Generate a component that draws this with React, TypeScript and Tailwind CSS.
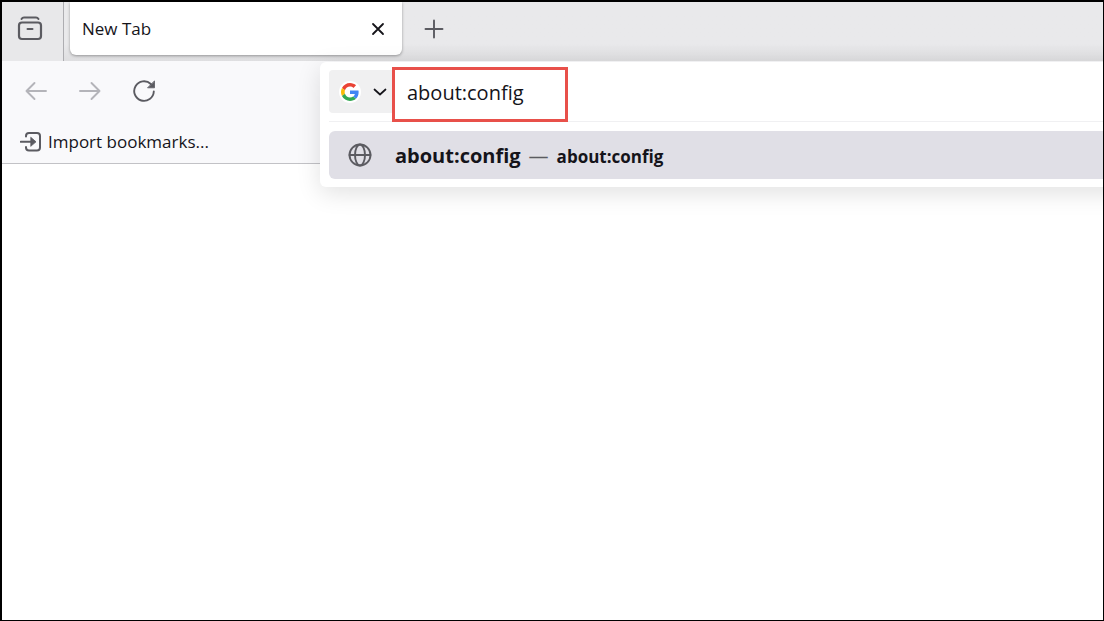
import type { ReactNode } from "react";

const Icon = ({ className, viewBox, children }: { className: string; viewBox: string; children: ReactNode }) => (
  <svg className={className} viewBox={viewBox} fill="none" stroke="currentColor" strokeLinecap="round" strokeLinejoin="round" aria-hidden="true">
    {children}
  </svg>
);

const GoogleLogo = () => (
  <svg className="size-[18px]" viewBox="0 0 48 48" aria-hidden="true">
    <path fill="#ea4335" d="M24 9.5c3.54 0 6.71 1.22 9.21 3.6l6.85-6.85C35.9 2.38 30.47 0 24 0 14.62 0 6.51 5.38 2.56 13.22l7.98 6.19C12.43 13.72 17.74 9.5 24 9.5z" />
    <path fill="#4285f4" d="M46.98 24.55c0-1.57-.15-3.09-.38-4.55H24v9.02h12.94c-.58 2.96-2.26 5.48-4.78 7.18l7.73 6c4.51-4.18 7.09-10.36 7.09-17.65z" />
    <path fill="#fbbc05" d="M10.53 28.59c-.48-1.45-.76-2.99-.76-4.59s.27-3.14.76-4.59l-7.98-6.19C.92 16.46 0 20.12 0 24c0 3.88.92 7.54 2.56 10.78l7.97-6.19z" />
    <path fill="#34a853" d="M24 48c6.48 0 11.93-2.13 15.89-5.81l-7.73-6c-2.15 1.45-4.92 2.3-8.16 2.3-6.26 0-11.57-4.22-13.47-9.91l-7.98 6.19C6.51 42.62 14.62 48 24 48z" />
  </svg>
);

const TabStrip = () => (
  <div className="flex h-[59px] bg-linear-to-b from-[#e9e9eb] from-70% to-[#dedee0]">
    <button type="button" aria-label="Firefox View" className="flex w-[62px] shrink-0 justify-center border-r border-[#adadb1] bg-[#e8e8ea] pt-3.5 pr-1.5 text-[#5b5b61]">
      <Icon className="h-[25px] w-[26px]" viewBox="0 0 26 25">
        <path d="M4.5 3c.6-1 1.500-1.400 2.500-1.400h12c1 0 1.900.4 2.500 1.400" strokeWidth="2" />
        <rect x="2" y="6.500" width="22" height="16.500" rx="3" strokeWidth="2.200" />
        <path d="M10.500 13h5" strokeWidth="2" />
      </Icon>
    </button>
    <div className="ml-1.5 flex h-[53px] w-[332px] shrink-0 items-center justify-between rounded-b-md bg-white pr-4 pl-3 shadow-[0_1px_3px_rgba(0,0,0,0.35)]">
      <span className="text-[17px] text-[#15141a]">New Tab</span>
      <button type="button" aria-label="Close tab" className="text-[#15141a]">
        <Icon className="size-4" viewBox="0 0 16 16">
          <path d="m3 3 10 10M13 3 3 13" strokeWidth="1.800" />
        </Icon>
      </button>
    </div>
    <button type="button" aria-label="New tab" className="ml-[22px] flex w-5 justify-center pt-[17px] text-[#5b5b61]">
      <Icon className="size-5 shrink-0" viewBox="0 0 20 20">
        <path d="M10 1.500v17M1.500 10h17" strokeWidth="1.900" />
      </Icon>
    </button>
  </div>
);

const Toolbar = () => (
  <div className="h-[103px] border-b border-[#c2c2c6] bg-[#f9f9fb]">
    <nav className="flex h-15 items-center gap-8 pl-[23px]">
      <button type="button" aria-label="Back" disabled className="text-[#b4b4b9]">
        <Icon className="size-[22px]" viewBox="0 0 22 22">
          <path d="M21 11H1.500M9.500 3l-8 8 8 8" strokeWidth="1.900" />
        </Icon>
      </button>
      <button type="button" aria-label="Forward" disabled className="text-[#b4b4b9]">
        <Icon className="size-[22px]" viewBox="0 0 22 22">
          <path d="M1 11h19.500M12.500 3l8 8-8 8" strokeWidth="1.900" />
        </Icon>
      </button>
      <button type="button" aria-label="Reload" className="text-[#5b5b61]">
        <Icon className="size-[22px]" viewBox="0 0 22 22">
          <path d="M20.800 11.500A9.800 9.800 0 1 1 17.800 4" strokeWidth="1.900" />
          <path d="M21.500 1.200v6.600h-6.600z" fill="currentColor" strokeWidth=".8" />
        </Icon>
      </button>
    </nav>
    <button type="button" className="flex h-[42px] items-center gap-1.5 pl-[18px] text-[17px] text-[#15141a]">
      <Icon className="size-[22px] text-[#5b5b61]" viewBox="0 0 22 22">
        <path d="M6 5.500V5a3 3 0 0 1 3-3h8a3 3 0 0 1 3 3v11.500a3 3 0 0 1-3 3H9a3 3 0 0 1-3-3V16" strokeWidth="2" />
        <path d="M.8 10.800H12" strokeWidth="2" />
        <path d="m11 6.500 5 4.300-5 4.300z" fill="currentColor" strokeWidth=".8" />
      </Icon>
      Import bookmarks...
    </button>
  </div>
);

const UrlBar = () => (
  <div className="absolute top-[60px] -right-8 left-[318px] rounded-l-md bg-white pb-2 pl-[9px] shadow-[0_6px_24px_rgba(0,0,0,0.12)]">
    <div className="flex h-15 border-b border-[#f0f0f2] pt-2">
      <button type="button" aria-label="Search engine" className="flex h-[43px] w-[63px] shrink-0 items-center rounded-l-sm bg-[#f0f0f1] pl-2.5 text-[#15141a]">
        <span className="flex size-[22px] items-center justify-center rounded-full bg-white">
          <GoogleLogo />
        </span>
        <Icon className="ml-3 h-2 w-3.5" viewBox="0 0 14 8">
          <path d="m1.500 1.500 5.500 5 5.500-5" strokeWidth="1.700" />
        </Icon>
      </button>
      <div className="relative flex-1">
        <input aria-label="Search or enter address" defaultValue="about:config" className="h-[45px] w-full bg-transparent pl-[15px] text-[20px] text-[#15141a] outline-none" />
        <div className="pointer-events-none absolute -top-[3px] left-0 h-[55px] w-[176px] border-3 border-[#e8504a]" />
      </div>
    </div>
    <a href="about:config" className="mt-[9px] flex h-12 items-center rounded-l-md bg-[#e0dfe6] pl-[19px] text-[#15141a]">
      <Icon className="size-6 text-[#5b5b61]" viewBox="0 0 24 24">
        <circle cx="12" cy="12" r="10.500" strokeWidth="1.900" />
        <ellipse cx="12" cy="12" rx="5" ry="10.500" strokeWidth="1.900" />
        <path d="M1.500 12h21" strokeWidth="1.900" />
      </Icon>
      <span className="ml-[23px] flex items-baseline pt-0.5 text-[20px]">
        <span className="font-bold">about:config</span>
        <span className="mx-2 text-[#5b5b61]">—</span>
        <span className="text-[17px] font-bold">about:config</span>
      </span>
    </a>
  </div>
);

export default function App() {
  return (
    <div className="min-h-screen overflow-hidden border-t-2 border-r border-b border-l-2 border-black bg-white font-['Open_Sans','Noto_Sans',sans-serif]">
      <header className="relative">
        <TabStrip />
        <Toolbar />
        <UrlBar />
      </header>
    </div>
  );
}
